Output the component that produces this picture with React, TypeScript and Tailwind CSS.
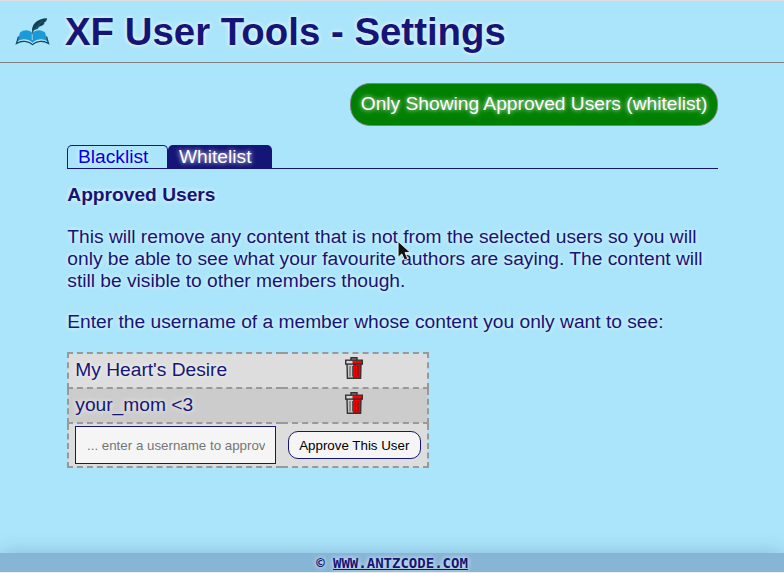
const glow = '[text-shadow:0_0_5px_#ffffff]';

function BookLogo() {
  return (
    <svg className="h-[28px] w-[35px] shrink-0" viewBox="0 0 35 28" fill="none">
      <path d="M5 14.500C9 11.500 14 11.500 17.500 15C21 11.500 26 11.500 30 14.500L32.500 23.500C27 20.500 21 21.500 17.500 25C14 21.500 8 20.500 2.500 23.500Z" fill="#1b9ad8" />
      <path d="M3.500 18.500L1.500 25.500C7 22 13.500 22.800 17.500 26.500C21.500 22.800 28 22 33.500 25.500L31.500 18.500" stroke="#124f66" strokeWidth="1.300" />
      <path d="M3.500 23.200C8 20.800 14 21.500 17.500 25.200C21 21.500 27 20.800 31.500 23.200" stroke="#e4f7ff" strokeWidth=".7" />
      <path d="M17.300 22C17 18 17.300 15 18.200 12" stroke="#cfeefa" strokeWidth=".7" />
      <path d="M17.200 14C16 7 22 0.500 32 0.300C32.300 2.500 30 4.500 28.500 5L29.500 5.200C28 8 24.500 8.500 23 9L24 9.500C22 11.500 19.500 11.500 18.500 13L17.500 17Z" fill="#0d4254" />
      <path d="M18.200 12.500L28 2.500" stroke="#4f8ba1" strokeWidth=".4" />
    </svg>
  );
}

function TrashIcon() {
  return (
    <svg className="block h-[22px] w-[18px]" viewBox="0 0 18 22">
      <path d="M6 3V.8H12V3" fill="#888" stroke="#333" strokeWidth="1.400" />
      <path d="M2 7H9V21.200H2.600Z" fill="#c8c8c8" />
      <path d="M8 7H16L15.700 21.200H8Z" fill="#f00000" />
      <path d="M2 7L2.400 21.300H15.600L16 7" fill="none" stroke="#333" strokeWidth="1.400" />
      <path d="M5 9V19.500M7.500 9V19.500" stroke="#555" strokeWidth="1" />
      <path d="M10.500 9V19.500M13 9V19.500" stroke="#701010" strokeWidth="1" />
      <path d="M.7 3.500H8V7H.7Z" fill="#d8d8d8" />
      <path d="M7.500 3.500H17.300V7H7.500Z" fill="#f00" />
      <rect x=".7" y="3.200" width="16.600" height="3.900" fill="none" stroke="#333" strokeWidth="1.400" />
    </svg>
  );
}

function UserRow({ name, shade }: { name: string; shade: string }) {
  return (
    <tr className={`h-[35px] border-2 border-dashed border-[#999] ${shade}`}>
      <td className="px-[6px] pt-0 pb-[2px]">{name}</td>
      <td className="pt-0 pr-[2px] pb-[6px] pl-0">
        <div className="flex justify-center"><TrashIcon /></div>
      </td>
    </tr>
  );
}

export default function App() {
  return (
    <div className={`relative flex h-[573px] w-[784px] flex-col overflow-hidden border-t border-[#dedede] bg-[#aae5fb] font-['Liberation_Sans',Arial,sans-serif] text-[19.2px] leading-[22px] text-[#151577] ${glow}`}>
      <header className="flex h-[62px] shrink-0 items-center border-b border-[#808080] pl-[15px]">
        <BookLogo />
        <h1 className="ml-[15px] text-[38.4px] leading-[44px] font-bold whitespace-nowrap">XF User Tools - Settings</h1>
      </header>
      <main className="flex-1 pr-[66px] pl-[67.300px]">
        <div className="flex justify-end pt-[20px]">
          <div className="flex h-[43px] w-[368px] items-center justify-center rounded-[20px] border border-[#808080] bg-[#008000] pb-[2px] whitespace-nowrap text-white">Only Showing Approved Users (whitelist)</div>
        </div>
        <nav className="mt-[19px] flex h-[24px] border-b border-[#151577]">
          <a className="h-[23px] w-[101px] rounded-t-[5px] border border-b-0 border-[#151577] pl-[9.700px] text-[#0000ee]">Blacklist</a>
          <a className="h-[23px] w-[104px] rounded-t-[5px] bg-[#151577] pt-px pl-[10.700px] text-white">Whitelist</a>
        </nav>
        <h2 className="mt-[15px] font-bold">Approved Users</h2>
        <p className="mt-[20px] whitespace-nowrap">
          This will remove any content that is not from the selected users so you will<br />
          only be able to see what your favourite authors are saying. The content will<br />
          still be visible to other members though.
        </p>
        <p className="mt-[19px]">Enter the username of a member whose content you only want to see:</p>
        <table className="mt-[19px] w-[362px] table-fixed border-collapse border-2 border-dashed border-[#999]">
          <colgroup>
            <col className="w-[214px]" />
            <col className="w-[146px]" />
          </colgroup>
          <tbody>
            <UserRow name="My Heart's Desire" shade="bg-[#dddddd]" />
            <UserRow name="your_mom <3" shade="bg-[#cccccc]" />
            <tr className="h-[44px] border-2 border-dashed border-[#999] bg-[#dddddd]">
              <td className="px-[6px] py-[2px]">
                <input placeholder="... enter a username to approve" className="block h-[38px] w-[201px] border border-[#151577] bg-[#f5f5f5] px-[10.700px] text-[13.333px] placeholder:text-[#757575] [text-shadow:none]" />
              </td>
              <td className="px-[6px] py-[2px]">
                <button className="block h-[28px] w-[133px] rounded-[10px] border border-[#151577] bg-[#f5f5f5] pr-[1px] text-[13.333px] leading-[15px] whitespace-nowrap text-black [text-shadow:none]">Approve This User</button>
              </td>
            </tr>
          </tbody>
        </table>
      </main>
      <footer className="mb-px flex h-[19px] shrink-0 items-center justify-center bg-[#87b5d5] pt-[2px] font-['DejaVu_Sans_Mono',monospace] text-[14px] leading-[17px] font-bold shadow-[0_0_20px_#87b5d5]">
        <span>©&nbsp;<a className="underline">WWW.ANTZCODE.COM</a></span>
      </footer>
      <div className="absolute bottom-0 left-0 h-px w-full bg-[#eeeeee]" />
      <svg className="absolute top-[239px] left-[397px] h-[22px] w-[15px]" viewBox="0 0 14 20">
        <path d="M1 1V16L4.500 12.700L7 18.500L10 17.200L7.500 11.500H12.500Z" fill="#111" stroke="#fff" strokeWidth=".8" />
      </svg>
    </div>
  );
}
